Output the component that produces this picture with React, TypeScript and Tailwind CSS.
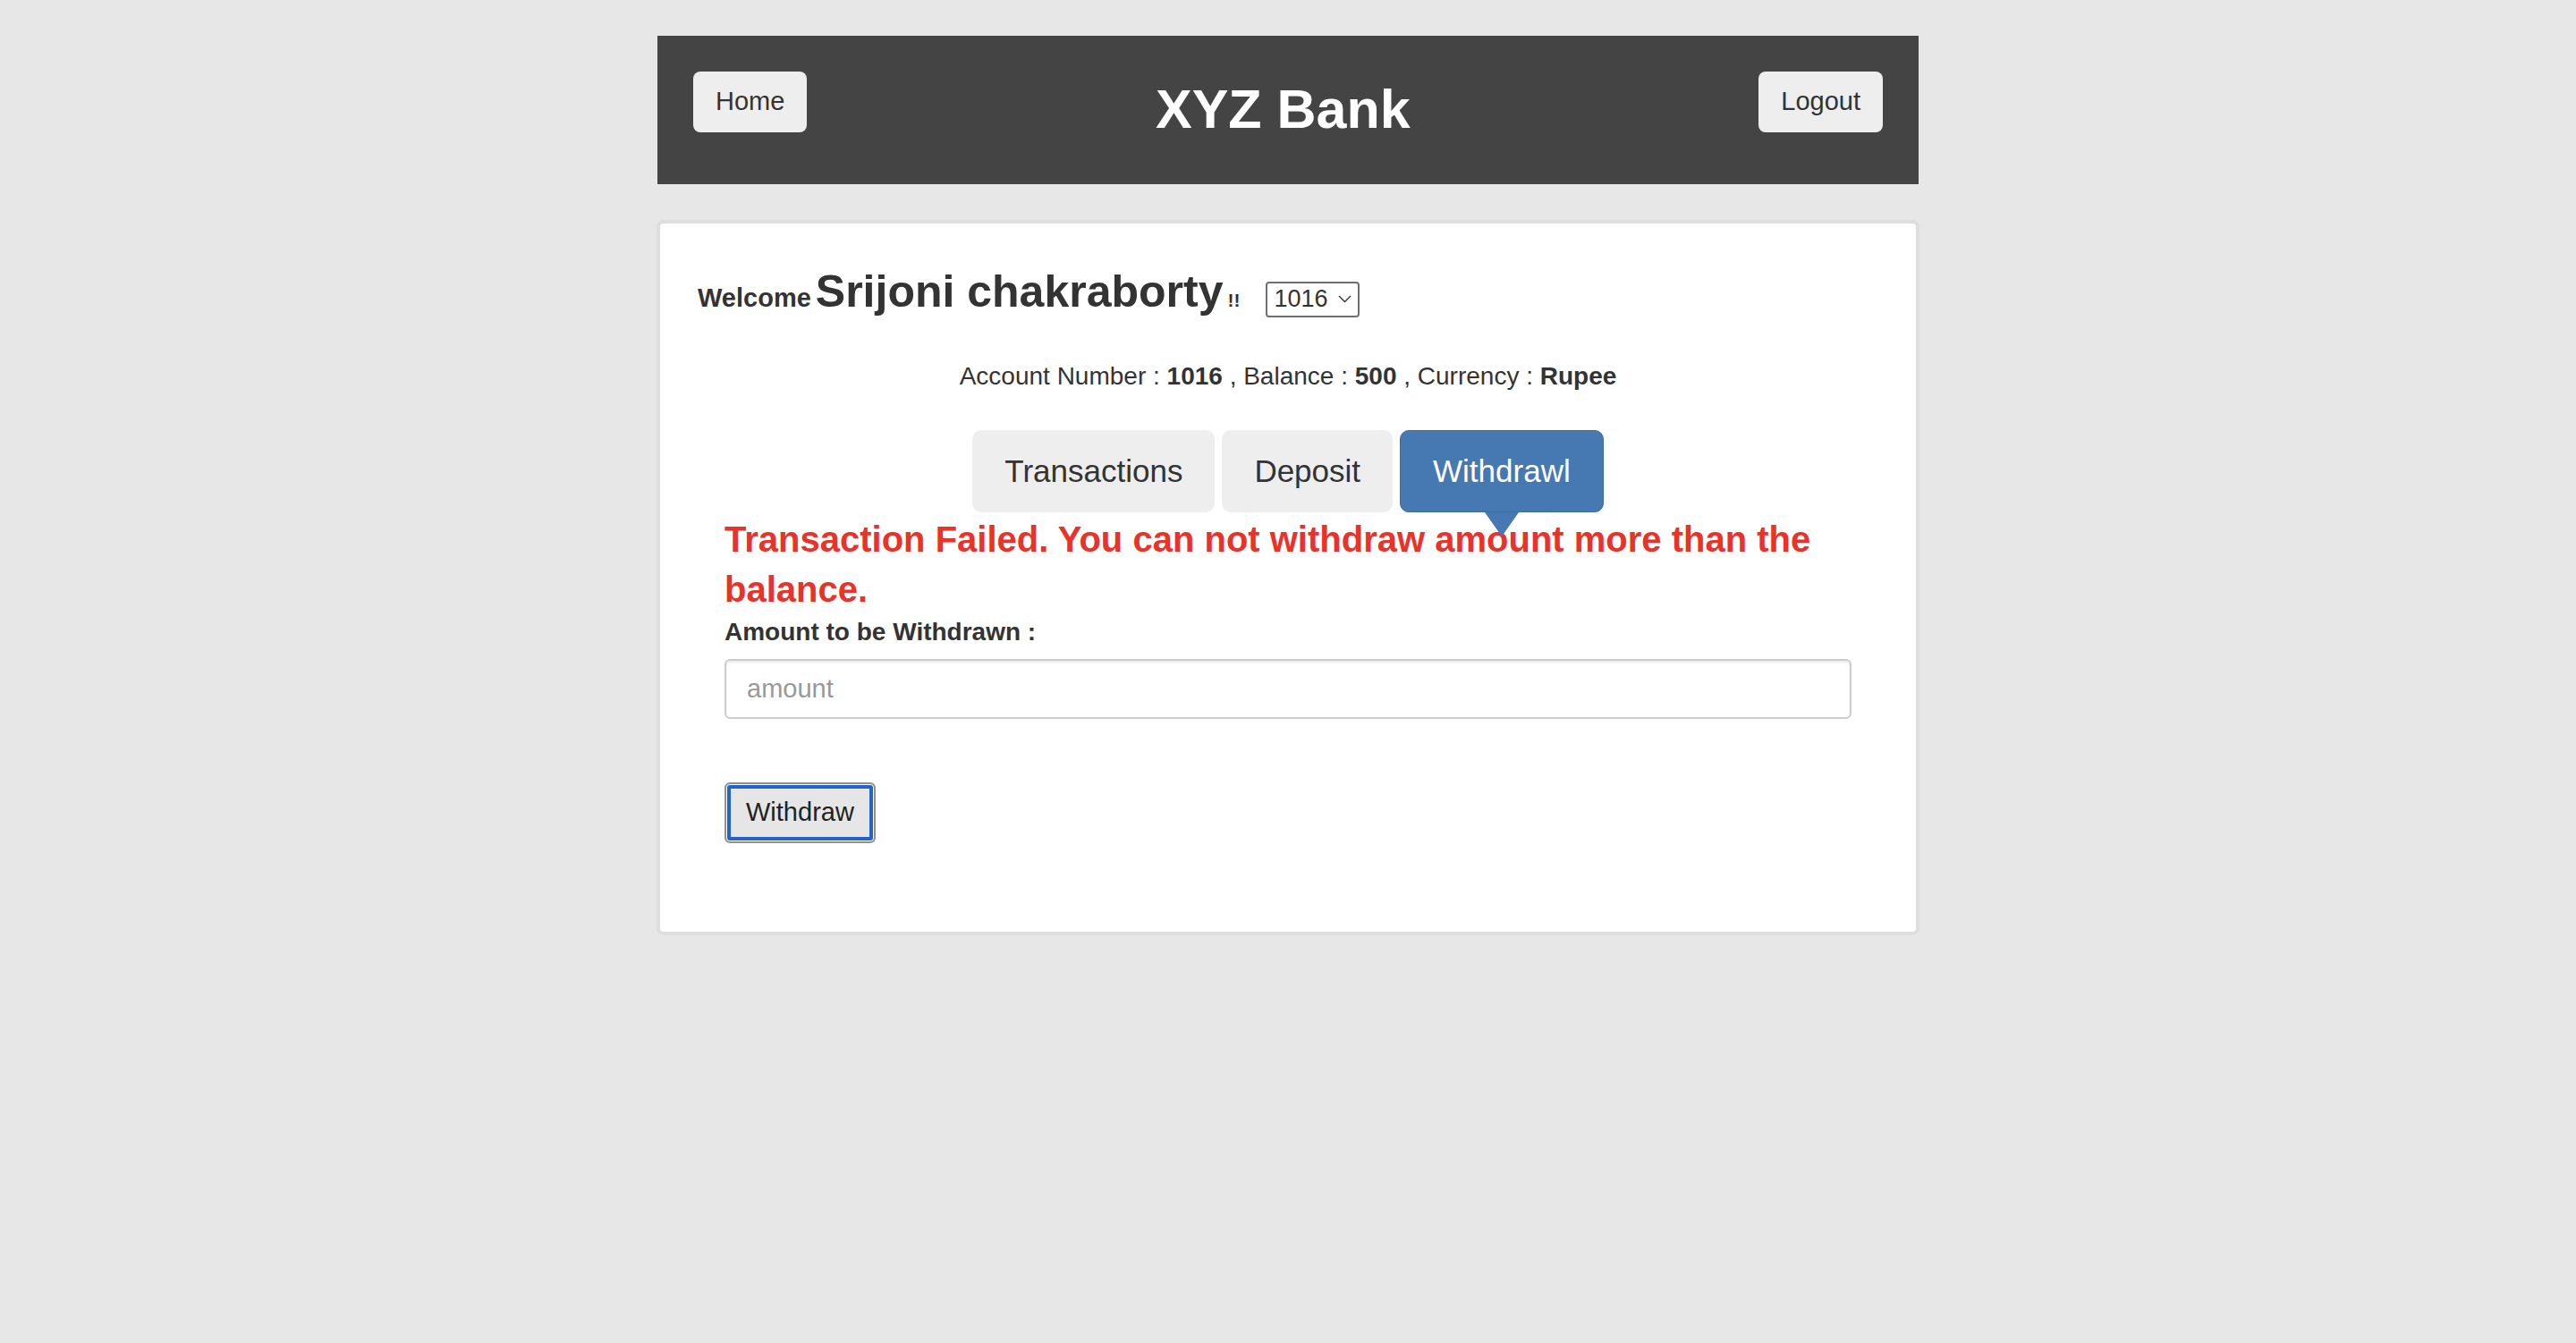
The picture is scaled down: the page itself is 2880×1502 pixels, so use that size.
import React, { useState } from 'react';

const font = { fontFamily: '"Liberation Sans", Arial, Helvetica, sans-serif' };

const tabs = ['Transactions', 'Deposit', 'Withdrawl'];

export default function App() {
  const [active, setActive] = useState('Withdrawl');
  const [amount, setAmount] = useState('');

  return (
    <div className="min-h-screen bg-[#e7e7e7] pt-[40px] text-[#333333]" style={font}>
      {/* Header */}
      <header className="mx-auto flex h-[166px] w-[1410px] items-center justify-between bg-[#444444] px-[40px]">
        <button className="mt-[40px] h-[68px] self-start rounded-[8px] bg-[#eeeeee] px-[25px] text-[29px] text-[#333333]">
          Home
        </button>
        <h1 className="text-[61px] font-bold text-white">XYZ Bank</h1>
        <button className="mt-[40px] h-[68px] self-start rounded-[8px] bg-[#eeeeee] px-[25px] text-[29px] text-[#333333]">
          Logout
        </button>
      </header>

      {/* Account card */}
      <div className="mx-auto mt-[40px] w-[1412px] rounded-[8px] border-4 border-[#dedede] bg-white px-[42px] pb-[99px] pt-[46px]">
        <div className="flex h-[60px] items-baseline leading-[60px]">
          <span className="text-[29px] font-bold">Welcome</span>
          <span className="ml-[5px] text-[50px] font-bold">Srijoni chakraborty</span>
          <span className="ml-[5px] text-[21px] font-bold">!!</span>
          <div className="ml-[28px] flex h-[40px] w-[105px] items-center justify-between rounded-[4px] border-2 border-[#6f6f6f] pl-[8px] pr-[7px] text-[27px] leading-none">
            <span>1016</span>
            <svg width="15" height="9" viewBox="0 0 15 9" fill="none">
              <path d="M1 1l6.5 6.5L14 1" stroke="#333" strokeWidth="1.4" />
            </svg>
          </div>
        </div>

        <p className="mt-[48px] text-center text-[28px] leading-[34px]">
          Account Number : <b>1016</b> , Balance : <b>500</b> , Currency : <b>Rupee</b>
        </p>

        {/* Tabs */}
        <div className="mt-[43px] flex justify-center gap-[8px]">
          {tabs.map((t) => (
            <div key={t} className="relative">
              <button
                onClick={() => setActive(t)}
                className={`h-[92px] rounded-[10px] px-[36px] text-[35px] ${
                  active === t
                    ? 'border border-[#3d6ca5] bg-[#4679b2] text-white'
                    : 'bg-[#eeeeee] text-[#333333]'
                }`}
              >
                {t}
              </button>
              {active === t && (
                <div className="absolute left-1/2 top-full z-10 -translate-x-1/2 border-x-[19px] border-t-[27px] border-x-transparent border-t-[#4679b2]" />
              )}
            </div>
          ))}
        </div>

        {/* Withdraw form */}
        <div className="px-[30px]">
          <p className="mt-[2px] text-[40px] font-bold leading-[56px] text-[#e8322a]">
            Transaction Failed. You can not withdraw amount more than the balance.
          </p>
          <label className="mt-[3px] block text-[28px] font-bold leading-[34px]">
            Amount to be Withdrawn :
          </label>
          <input
            value={amount}
            onChange={(e) => setAmount(e.target.value)}
            placeholder="amount"
            className="mt-[13px] block h-[67px] w-full rounded-[6px] border-2 border-[#cccccc] px-[23px] text-[29px] shadow-[inset_0_2px_3px_rgba(0,0,0,0.08)] outline-none placeholder:text-[#999999]"
          />
          <button className="mt-[71px] h-[68px] rounded-[6px] border-2 border-[#909090] bg-[#e6e6e6] px-[22px] text-[29px] text-[#222222] shadow-[inset_0_0_0_1px_#ffffff,inset_0_0_0_5px_#2563c8]">
            Withdraw
          </button>
        </div>
      </div>
    </div>
  );
}
